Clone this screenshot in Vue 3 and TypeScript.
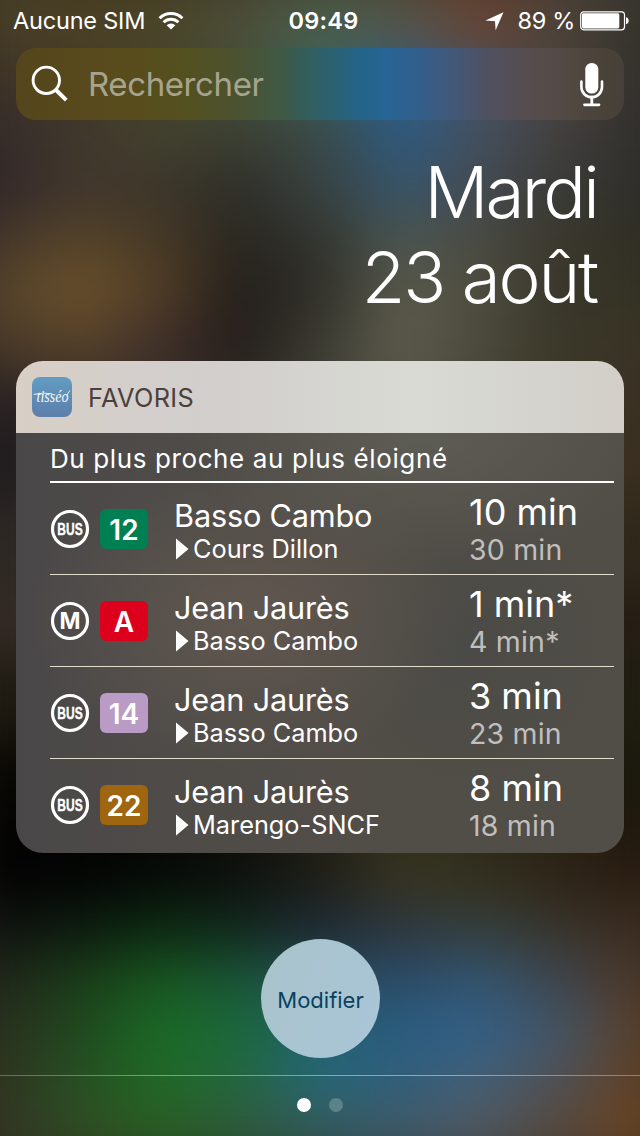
<script setup lang="ts">
interface Departure {
  mode: 'BUS' | 'M'
  line: string
  color: string
  stop: string
  direction: string
  next: string
  following: string
}

const departures: Departure[] = [
  { mode: 'BUS', line: '12', color: '#007f52', stop: 'Basso Cambo', direction: 'Cours Dillon', next: '10 min', following: '30 min' },
  { mode: 'M', line: 'A', color: '#dc001d', stop: 'Jean Jaurès', direction: 'Basso Cambo', next: '1 min*', following: '4 min*' },
  { mode: 'BUS', line: '14', color: '#b99bc5', stop: 'Jean Jaurès', direction: 'Basso Cambo', next: '3 min', following: '23 min' },
  { mode: 'BUS', line: '22', color: '#a0660f', stop: 'Jean Jaurès', direction: 'Marengo-SNCF', next: '8 min', following: '18 min' },
]

// Wallpaper bands: height in pixels, then nine evenly spaced colours across the width.
const bands: [number, string][] = [
  [48, '4b4228 4a3f22 4a4326 4b4a35 4c5a44 565240 6c4230 50443a 3a3730'],
  [42, '443a28 4a4026 4a4428 4b4f3a 46604f 4c5658 60463c 4a4238 33322c'],
  [45, '3f3328 433928 41402a 414a38 386060 2a6088 4e5060 4c433e 33312d'],
  [53, '362b2a 40382c 44422e 3c4032 3c4a46 2c5a84 44505f 43403d 302f2c'],
  [55, '33282a 42372c 3c362a 2e2e28 384240 37556b 454a50 3a3a36 2e2e2a'],
  [50, '45372a 56442a 483926 28261f 32342e 4c5650 4a4a42 3a382c 302f24'],
  [50, '54432a 6b512b 523d27 231e1b 302f29 5a5a4c 4e4c3e 38362a 353324'],
  [55, '4a3a2a 57422a 40302a 241d1b 3a3a30 5e5c4e 4c4a3c 3a3728 3a3325'],
  [55, '2a2224 382e26 38302a 2a2622 44443a 55534a 48463a 3a3528 3c3224'],
  [75, '1f1a1e 2a2424 302a26 2a2622 3a3830 44423a 403e34 383024 3c3020'],
  [85, '2e2824 2e2824 302a26 302a26 33302a 383630 383630 302a20 302819'],
  [75, '332b24 332b24 332b24 332b24 332b24 33302a 302d24 28221a 241c12'],
  [80, '1e1a10 1e1a10 1e1a10 1e1a10 24201a 24201a 24201a 221e14 1f1c10'],
  [70, '080602 080602 0c0a06 14120c 1a1812 201e16 221e14 1e1a0e 1a180c'],
  [50, '020202 020202 060604 0e0d0a 201e14 36331f 2e2b1c 2a2214 20160d'],
  [45, '030303 040604 070c08 0e120e 1e1f1a 363322 34311f 2e2418 2c1e12'],
  [50, '121411 0d1c0f 0c2c13 122a1e 1f2a36 2e3840 343f40 38352c 3c2c20'],
  [50, '20261a 1a3c19 18561f 1a5538 22505c 2c4a68 335670 3e444e 4d3726'],
  [50, '2b301e 20481f 1a6a26 1b683a 206070 2a5c80 335f86 445462 5a3f28'],
  [45, '303420 255022 1f6a24 236640 26687a 305e7c 426078 4f5056 623f22'],
  [64, '333424 304c24 2a5e24 2e5a3a 335a5c 3f5a6a 505860 56483c 6a4420'],
]

// The colour stops run from x = 30 to x = 670 because each band overhangs the screen by 30px.
const gradient = (colors: string): string =>
  `linear-gradient(90deg, ${colors.split(' ').map((c, i) => `#${c} ${30 + i * 80}px`).join(', ')})`
</script>

<template>
  <main class="screen">
    <div class="wallpaper" aria-hidden="true">
      <div class="bands">
        <div v-for="(b, i) in bands" :key="i" class="band" :style="{ height: b[0] + 'px', backgroundImage: gradient(b[1]) }"></div>
      </div>
    </div>

    <header class="status">
      <div class="status-left">
        <span class="carrier">Aucune SIM</span>
        <svg class="wifi" width="26" height="20" viewBox="0 0 26 20">
          <g fill="none" stroke="#fff" stroke-width="2.9">
            <path d="M1.6 7.2 A16.2 16.2 0 0 1 24.4 7.2" />
            <path d="M5.6 11.3 A10.5 10.5 0 0 1 20.4 11.3" />
          </g>
          <path d="M13 18.6 L8.6 14.2 A6.3 6.3 0 0 1 17.4 14.2 Z" fill="#fff" />
        </svg>
      </div>
      <span class="clock">09:49</span>
      <div class="status-right">
        <svg class="arrow" width="19" height="19" viewBox="0 0 19 19">
          <path d="M18.5 0.3 L10.6 18.3 L10 9.3 L0.4 8.6 Z" fill="#fff" />
        </svg>
        <span class="percent">89 %</span>
        <svg class="battery" width="50" height="20" viewBox="0 0 50 20">
          <rect x="0.7" y="0.8" width="43.8" height="18" rx="3" fill="none" stroke="#fff" stroke-width="1.2" />
          <rect x="2" y="2.2" width="37.3" height="15.2" rx="1.4" fill="#fff" />
          <path d="M46 6.3 C49.6 6.8 49.6 12.8 46 13.3 Z" fill="#fff" />
        </svg>
      </div>
    </header>

    <section class="search">
      <svg class="loupe" width="38" height="38" viewBox="0 0 38 38">
        <circle cx="15.3" cy="15.3" r="13.2" fill="none" stroke="#fff" stroke-width="2.9" />
        <path d="M24.5 24.5 L35.3 35.2" stroke="#fff" stroke-width="4" />
      </svg>
      <span class="placeholder">Rechercher</span>
      <svg class="mic" width="24" height="44" viewBox="0 0 24 44">
        <rect x="5.3" y="0" width="13" height="30.5" rx="6.3" fill="#fff" />
        <path d="M1.4 18.5 V24 A10.3 10.3 0 0 0 22 24 V18.5" fill="none" stroke="#fff" stroke-width="2.6" stroke-linecap="round" />
        <path d="M11.8 34 V41.5 M4.5 41.8 H19" fill="none" stroke="#fff" stroke-width="2.8" stroke-linecap="round" />
      </svg>
    </section>

    <section class="date">
      <div class="day">Mardi</div>
      <div class="full">23 août</div>
    </section>

    <section class="widget">
      <div class="widget-head">
        <svg class="app-icon" width="40" height="40" viewBox="0 0 40 40">
          <defs>
            <linearGradient id="icon-fill" x1="0" y1="0" x2="0" y2="1">
              <stop offset="0" stop-color="#629cc2" />
              <stop offset="1" stop-color="#5d7eaa" />
            </linearGradient>
          </defs>
          <rect width="40" height="40" rx="8" fill="url(#icon-fill)" />
          <path d="M1.5 17.4 Q11 15.4 20 16.6" fill="none" stroke="#e4edf4" stroke-width="1" />
          <text class="icon-text" transform="translate(4.5 25.3) scale(1 1.15)">tisséo</text>
          <path d="M34.5 18.8 L37.8 13.5" stroke="#e4edf4" stroke-width="1" />
        </svg>
        <span class="widget-title">FAVORIS</span>
      </div>
      <div class="widget-body">
        <div class="sort">Du plus proche au plus éloigné</div>
        <div v-for="d in departures" :key="d.line" class="row">
          <svg class="mode" width="40" height="40" viewBox="0 0 40 40">
            <circle cx="20" cy="20" r="17.5" fill="none" stroke="#fff" stroke-width="3.2" />
            <text v-if="d.mode === 'BUS'" class="mode-bus" transform="translate(20 26.1) scale(0.7 1)">BUS</text>
            <text v-else class="mode-metro" x="20" y="28.2">M</text>
          </svg>
          <span class="line" :style="{ backgroundColor: d.color }">{{ d.line }}</span>
          <div class="place">
            <div class="stop">{{ d.stop }}</div>
            <div class="direction">
              <svg width="13" height="22" viewBox="0 0 13 22"><path d="M0 0.5 L12.5 11 L0 21.5 Z" fill="#fff" /></svg>
              <span>{{ d.direction }}</span>
            </div>
          </div>
          <div class="times">
            <div class="next">{{ d.next }}</div>
            <div class="following">{{ d.following }}</div>
          </div>
        </div>
      </div>
    </section>

    <button class="edit" type="button">Modifier</button>

    <footer class="pager">
      <i class="dot active"></i>
      <i class="dot"></i>
    </footer>
  </main>
</template>

<style>
body {
  margin: 0;
  background: #2a2620;
}
</style>

<style scoped>
.screen {
  position: relative;
  width: 640px;
  height: 1136px;
  overflow: hidden;
  display: flex;
  flex-direction: column;
  color: #fff;
  font-family: Inter, 'Liberation Sans', sans-serif;
  white-space: nowrap;
}
.screen > * {
  position: relative;
  flex: none;
  box-sizing: border-box;
}
.screen > .wallpaper {
  position: absolute;
  inset: 0;
  overflow: hidden;
}
.bands {
  position: absolute;
  inset: -28px -30px;
  filter: blur(24px);
}

.status {
  height: 40px;
  display: grid;
  grid-template-columns: 1fr auto 1fr;
  align-items: center;
  padding: 1px 10px 0 13px;
  font-size: 23.5px;
  line-height: 40px;
}
.status-left,
.status-right {
  display: flex;
  align-items: center;
}
.status-right {
  justify-content: flex-end;
}
.carrier {
  width: 145px;
  letter-spacing: -0.2px;
}
.clock {
  padding-left: 4px;
  font-weight: 600;
  letter-spacing: 0.25px;
}
.arrow {
  margin-right: 13px;
}
.percent {
  letter-spacing: -0.3px;
}
.battery {
  margin-left: 5px;
}

.search {
  height: 72px;
  margin: 8px 16px 0;
  border-radius: 20px;
  display: flex;
  align-items: center;
  padding: 0 20px 0 15px;
  background: linear-gradient(90deg, #54451d 0, #584a1c 12%, #584c1c 20%, #53501f 28%, #4c5230 36%, #405842 43%, #305f62 49%, #23648a 57%, #276494 61%, #315f8c 66%, #41597c 71%, #4e5162 77%, #554d50 83%, #544a45 90%, #4a4339 96%, #464038 100%);
}
.placeholder {
  flex: 1;
  margin-left: 19px;
  font-size: 33px;
  letter-spacing: -0.4px;
  color: #a7a48e;
}
.mic {
  margin-top: 1px;
}

.date {
  height: 241px;
  padding: 30px 42px 0 0;
  text-align: right;
  font-size: 71px;
  font-weight: 300;
  line-height: 85px;
}
.day {
  letter-spacing: -2.8px;
  margin-right: 1px;
}
.full {
  letter-spacing: -2.2px;
  margin-right: 1px;
}

.widget {
  height: 492px;
  margin: 0 16px;
  border-radius: 27px;
  overflow: hidden;
}
.widget-head {
  height: 72px;
  display: flex;
  align-items: center;
  padding-left: 16px;
  background: linear-gradient(90deg, #d8cfc6 0, #d4cfcb 18%, #d2cecb 30%, #d3d1ce 42%, #d7d7d2 55%, #dadad4 66%, #d7d7d1 76%, #d4d3cd 86%, #d3cfc8 100%);
}
.icon-text {
  font: italic 14px 'Liberation Serif', serif;
  fill: #f4f8fb;
}
.widget-title {
  margin-left: 16px;
  font-size: 25.3px;
  letter-spacing: 0.35px;
  color: #4b403d;
}
.widget-body {
  height: 420px;
  box-sizing: border-box;
  padding: 0 10px 0 34px;
  background:
    radial-gradient(ellipse 240px 130px at 67% 0, #5d5c55 0, #5d5c5500 100%),
    radial-gradient(ellipse 220px 150px at 38% 44%, #60574f 0, #60574f00 100%),
    radial-gradient(ellipse 160px 150px at 72% 50%, #4a4a46 0, #4a4a4600 100%),
    linear-gradient(90deg, #4a4748 0, #4e4b48 25%, #524d47 55%, #504e47 100%);
}
.sort {
  height: 50px;
  box-sizing: border-box;
  border-bottom: 2px solid #fff;
  font-size: 26px;
  letter-spacing: 0.61px;
  line-height: 51px;
}
.row {
  height: 92px;
  box-sizing: border-box;
  display: grid;
  grid-template-columns: 50px 48px 26px 295px 1fr;
  align-items: center;
  border-bottom: 1px solid #e2dccd;
}
.row:last-child {
  border-bottom-color: transparent;
}
.mode-bus {
  font: 700 17.2px 'Liberation Sans', sans-serif;
  text-anchor: middle;
  fill: #fff;
  stroke: #fff;
  stroke-width: 0.4;
}
.mode-metro {
  font: 700 22.5px Inter, sans-serif;
  text-anchor: middle;
  fill: #fff;
}
.line {
  height: 40px;
  border-radius: 6px;
  text-align: center;
  font-size: 28px;
  line-height: 42px;
  font-weight: 600;
}
.place {
  grid-column: 4;
  padding-top: 7px;
}
.stop {
  font-size: 30.7px;
  letter-spacing: -0.2px;
  line-height: 34px;
}
.direction {
  display: flex;
  align-items: center;
  gap: 4px;
  padding-left: 2px;
  font-size: 25.3px;
  line-height: 32px;
}
.times {
  padding-top: 2px;
}
.next {
  font-size: 36px;
  line-height: 40px;
}
.following {
  font-size: 28.5px;
  letter-spacing: 0.2px;
  line-height: 36px;
  color: #c0bfbd;
}

.edit {
  width: 119px;
  height: 119px;
  margin: 86px 0 0 261px;
  padding: 3px 0 0;
  border: 0;
  border-radius: 50%;
  background: linear-gradient(115deg, #a9c3cb, #a9c6d8);
  color: #07425e;
  font: 400 22px Inter, 'Liberation Sans', sans-serif;
  text-align: center;
}
.pager {
  height: 61px;
  margin-top: 17px;
  display: flex;
  justify-content: center;
  gap: 18px;
  padding-top: 22px;
  border-top: 1px solid;
  border-image: linear-gradient(90deg, #6b6a55, #5f8f55 12%, #4fc050 26%, #4cb890 40%, #55b8dc 52%, #7ab0d4 68%, #8f98a0 82%, #a87c50) 1;
}
.dot {
  width: 14px;
  height: 14px;
  border-radius: 50%;
  background: #ffffff38;
}
.dot.active {
  background: #fff;
}
</style>
